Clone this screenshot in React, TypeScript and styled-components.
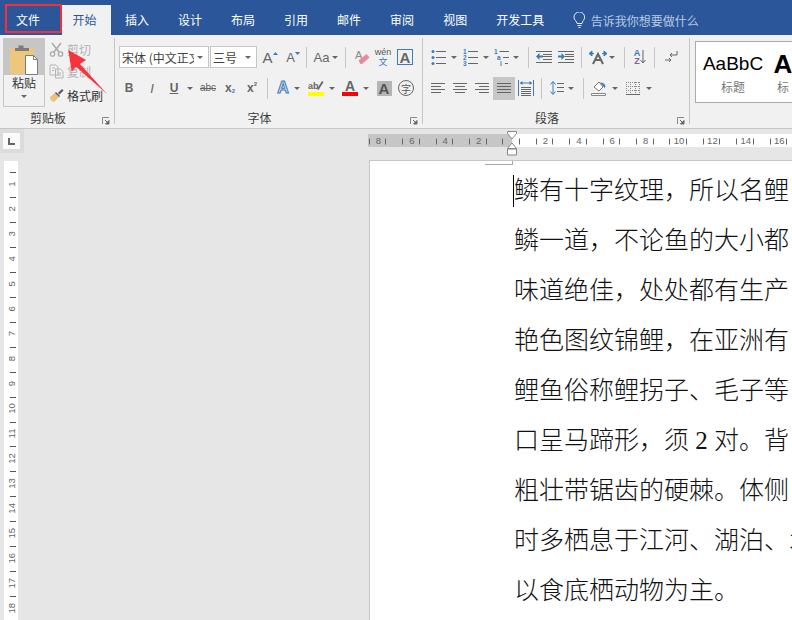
import React from 'react'
import styled, { createGlobalStyle } from 'styled-components'

const uiFont = `"Noto Sans CJK SC", "Liberation Sans", sans-serif`
const latinFont = `"Liberation Sans", "Noto Sans CJK SC", sans-serif`

const GlobalStyle = createGlobalStyle`
    html, body {
        margin: 0;
        padding: 0;
        height: 100%;
        overflow: hidden;
        font-family: ${uiFont};
    }
    #root { height: 100%; }
`

const Window = styled.div`
    position: relative;
    width: 792px;
    height: 620px;
    overflow: hidden;
    background: #e6e6e6;
    display: flex;
    flex-direction: column;
`

/* title tabs */
const TabBar = styled.div`
    height: 35px;
    flex: none;
    background: #2b579a;
    display: flex;
    align-items: flex-end;
    color: #fff;
    font-size: 12px;
`
const Tab = styled.div<{ $active?: boolean; $file?: boolean }>`
    height: 30px;
    line-height: 29px;
    padding: ${p => (p.$active ? '0 14px 0 11px' : p.$file ? '0 16.5px 0 16px' : '0 14.5px')};
    margin-right: ${p => (p.$file ? '5px' : '0')};
    background: ${p => (p.$active ? '#f1f1f1' : 'transparent')};
    color: ${p => (p.$active ? '#2b579a' : '#fff')};
    white-space: nowrap;
`
const TellMe = styled.div`
    height: 30px;
    margin-left: 14px;
    display: flex;
    align-items: center;
    gap: 5px;
    color: #b9c9e2;
    font-size: 12px;
    svg { flex: none; }
`
const FileHighlight = styled.div`
    position: absolute;
    left: 5px;
    top: 4px;
    width: 53px;
    height: 25px;
    border: 2px solid #f2303a;
`
const RedArrow = styled.svg`
    position: absolute;
    left: 60px;
    top: 44px;
`

/* ribbon */
const Ribbon = styled.div`
    height: 90px;
    flex: none;
    background: #f1f1f1;
    border-bottom: 1px solid #c6c6c6;
    display: flex;
    padding-top: 3px;
    overflow: hidden;
`
const Group = styled.div<{ $w: number }>`
    width: ${p => p.$w}px;
    flex: none;
    height: 86px;
    box-sizing: border-box;
    border-right: 1px solid #c6c6c6;
    display: flex;
    flex-direction: column;
`
const GroupBody = styled.div`
    flex: 1;
    display: flex;
    min-height: 0;
`
const ToolColumn = styled.div`
    display: flex;
    flex-direction: column;
    padding-top: 8px;
    gap: 9px;
`
const Row = styled.div`
    height: 22px;
    display: flex;
    align-items: center;
`
const GroupFooter = styled.div`
    position: relative;
    height: 18px;
    margin-top: auto;
    margin-bottom: -4px;
    padding-right: 18px;
    font-size: 12px;
    line-height: 16px;
    color: #3c3c3c;
    text-align: center;
`
const Expander = styled.svg`
    position: absolute;
    right: 4px;
    top: 7px;
`
const Tool = styled.div<{ $w?: number; $ml?: number }>`
    width: ${p => p.$w ?? 16}px;
    margin-left: ${p => p.$ml ?? 0}px;
    flex: none;
    height: 22px;
    display: flex;
    align-items: center;
    justify-content: center;
    color: #666;
    font-family: ${latinFont};
`
const PressedTool = styled(Tool)`
    background: #c6c6c6;
    height: 23px;
`
const Caret = styled.span<{ $ml?: number; $mt?: number }>`
    flex: none;
    margin-left: ${p => p.$ml ?? 0}px;
    margin-top: ${p => p.$mt ?? 0}px;
    width: 0;
    height: 0;
    border-left: 3px solid transparent;
    border-right: 3px solid transparent;
    border-top: 3px solid #666;
`
const Separator = styled.span<{ $ml?: number }>`
    flex: none;
    width: 1px;
    height: 21px;
    margin-left: ${p => p.$ml ?? 0}px;
    background: #c6c6c6;
`
const Glyph = styled.span<{ $size?: number; $bold?: boolean; $italic?: boolean; $under?: boolean; $strike?: boolean }>`
    font-size: ${p => p.$size ?? 12}px;
    font-weight: ${p => (p.$bold ? 700 : 400)};
    font-style: ${p => (p.$italic ? 'italic' : 'normal')};
    text-decoration: ${p => (p.$under ? 'underline' : p.$strike ? 'line-through' : 'none')};
    white-space: nowrap;
    line-height: 1;
`
const GlowGlyph = styled.span`
    font-size: 16px;
    font-weight: 700;
    line-height: 1;
    color: #dbe8f6;
    -webkit-text-stroke: 1px #3e7ab9;
`
const Script = styled.span<{ $up?: boolean }>`
    font-size: 6px;
    color: ${p => (p.$up ? '#666' : '#3e7ab9')};
    position: relative;
    top: ${p => (p.$up ? -4 : 3)}px;
    font-weight: 700;
`
const WenStack = styled.span`
    display: flex;
    flex-direction: column;
    align-items: center;
    font-size: 9px;
    line-height: 9px;
    color: #555;
    b {
        font-weight: 400;
        font-family: ${uiFont};
        color: #3e7ab9;
    }
`
const SortStack = styled.span`
    display: flex;
    flex-direction: column;
    align-items: center;
    font-size: 9px;
    font-weight: 700;
    line-height: 8px;
    color: #3e7ab9;
    i {
        font-style: normal;
        color: #8064a2;
    }
`
const BoxedGlyph = styled.span`
    width: 14px;
    height: 14px;
    border: 1px solid #3e7ab9;
    display: flex;
    align-items: center;
    justify-content: center;
    font-size: 15px;
    font-weight: 700;
    color: #666;
`
const ShadedGlyph = styled.span`
    width: 15px;
    height: 15px;
    background: #b4b4b4;
    display: flex;
    align-items: center;
    justify-content: center;
    font-size: 15px;
    font-weight: 700;
    color: #555;
`
const CircledGlyph = styled.span`
    width: 14px;
    height: 14px;
    border: 1px solid #666;
    border-radius: 50%;
    display: flex;
    align-items: center;
    justify-content: center;
    font-size: 10px;
    color: #555;
    font-family: ${uiFont};
`
const ColorGlyph = styled.span<{ $bar: string }>`
    width: 16px;
    height: 16px;
    position: relative;
    display: flex;
    justify-content: center;
    font-size: 14px;
    font-weight: 700;
    line-height: 12px;
    color: #666;
    &::after {
        content: '';
        position: absolute;
        left: 0;
        right: 0;
        bottom: 0;
        height: 4px;
        background: ${p => p.$bar};
    }
`
const Select = styled.div<{ $w: number; $ml?: number }>`
    width: ${p => p.$w}px;
    margin-left: ${p => p.$ml ?? 0}px;
    flex: none;
    height: 22px;
    box-sizing: border-box;
    background: #fff;
    border: 1px solid #c6c6c6;
    display: flex;
    align-items: center;
    padding: 0 5px 0 2px;
    font-size: 12px;
    color: #444;
    white-space: nowrap;
    overflow: hidden;
`
const SelectText = styled.span`
    flex: 1;
    overflow: hidden;
    min-width: 0;
`

/* clipboard */
const PasteButton = styled.div`
    width: 42px;
    height: 69px;
    margin-left: 3px;
    flex: none;
    box-sizing: border-box;
    border: 1px solid #c6c6c6;
    display: flex;
    flex-direction: column;
    align-items: center;
    font-size: 12px;
    color: #333;
`
const PasteIcon = styled.div`
    width: 100%;
    height: 36px;
    flex: none;
    background: #c6c6c6;
    display: flex;
    justify-content: center;
    align-items: flex-end;
`
const PasteLabel = styled.div`
    line-height: 16px;
`
const ClipColumn = styled.div`
    margin-left: 4px;
    display: flex;
    flex-direction: column;
`
const ClipItem = styled.div<{ $off?: boolean; $h: number }>`
    height: ${p => p.$h}px;
    display: flex;
    align-items: center;
    gap: 3px;
    font-size: 12px;
    color: ${p => (p.$off ? '#b1b1b1' : '#333')};
    svg { flex: none; }
`

/* style gallery */
const Gallery = styled.div`
    margin: 3px 0 0 5px;
    flex: none;
    width: 110px;
    height: 60px;
    background: #fff;
    border: 1px solid #ababab;
    display: flex;
    padding-left: 7px;
    overflow: hidden;
`
const StyleCard = styled.div<{ $w: number }>`
    width: ${p => p.$w}px;
    flex: none;
    display: flex;
    flex-direction: column;
    align-items: center;
    color: #777;
    font-size: 12px;
    line-height: 16px;
    white-space: nowrap;
`
const StylePreview = styled.div<{ $size: number; $bold?: boolean }>`
    height: 30px;
    margin-top: 7px;
    font-family: ${latinFont};
    font-size: ${p => p.$size}px;
    font-weight: ${p => (p.$bold ? 700 : 400)};
    line-height: 30px;
    color: #000;
`

/* document area */
const Workspace = styled.div`
    flex: 1;
    min-height: 0;
    display: flex;
`
const LeftRail = styled.div`
    width: 24px;
    flex: none;
    display: flex;
    flex-direction: column;
`
const CornerBox = styled.div`
    height: 24px;
    flex: none;
    background: #dcdcdc;
    padding: 4px 4px 4px 3px;
    box-sizing: border-box;
`
const CornerButton = styled.div`
    height: 16px;
    background: #fafafa;
    display: flex;
    align-items: center;
    justify-content: center;
`
const VerticalRuler = styled.svg`
    margin: 8px 0 0 4px;
    display: block;
`
const Canvas = styled.div`
    flex: 1;
    min-width: 0;
    display: flex;
    flex-direction: column;
    padding: 5px 0 0 344px;
    position: relative;
`
const HorizontalRuler = styled.svg`
    display: block;
    flex: none;
`
const IndentMarker = styled.svg`
    position: absolute;
    left: 483px;
    top: 2px;
`
const Page = styled.div`
    position: relative;
    margin: 13px 0 0 1px;
    flex: 1;
    background: #fff;
    border-left: 1px solid #c6c6c6;
    border-top: 1px solid #c6c6c6;
    padding: 5px 0 0 144px;
    overflow: hidden;
`
const MarginMark = styled.div`
    position: absolute;
    left: 115px;
    top: 0;
    width: 27px;
    height: 3px;
    border-right: 1px solid #a8a8a8;
    border-bottom: 1px solid #a8a8a8;
`
const Cursor = styled.div`
    position: absolute;
    left: 143px;
    top: 14px;
    width: 1px;
    height: 32px;
    background: #000;
`
const Line = styled.p`
    margin: 0;
    height: 50px;
    line-height: 50px;
    font-family: "Liberation Serif", "Noto Sans CJK SC", serif;
    font-size: 25px;
    font-weight: 300;
    color: #111;
    white-space: nowrap;
`

const Ico: React.FC<{ w?: number; h?: number; children: React.ReactNode }> = ({ w = 16, h = 16, children }) => (
    <svg width={w} height={h} viewBox={`0 0 ${w} ${h}`} fill="none">
        {children}
    </svg>
)

const ExpanderIcon = () => (
    <Expander width="8" height="8" viewBox="0 0 8 8" fill="none">
        <path d="M.5 7V.5H7" stroke="#888" />
        <path d="M3 3l3 3M7 3.5V7H3.5z" stroke="#666" fill="#666" />
    </Expander>
)

const lines = (ys: number[], x1: number, x2: number, color = '#666') =>
    ys.map(y => <path key={y} d={`M${x1} ${y + 0.5}H${x2}`} stroke={color} />)

const ListIcon = ({ kind }: { kind: 'bullet' | 'number' | 'multi' }) => (
    <Ico w={16} h={17}>
        {kind === 'bullet' &&
            [2, 8, 14].map(y => <circle key={y} cx="2" cy={y + 0.5} r="1.5" fill="#3e7ab9" />)}
        {kind === 'number' &&
            ['1', '2', '3'].map((n, i) => (
                <text key={n} x="0" y={5 + i * 6} fontSize="6.5" fontWeight="700" fontFamily="Liberation Sans" fill="#3e7ab9">
                    {n}
                </text>
            ))}
        {kind === 'multi' &&
            ['1', 'a', 'i'].map((n, i) => (
                <text key={n} x={i * 3} y={5 + i * 6} fontSize="6.5" fontWeight="700" fontFamily="Liberation Sans" fill="#3e7ab9">
                    {n}
                </text>
            ))}
        {kind === 'multi' ? (
            <path d="M5.5 2.500H15M9 8.500H15M11 14.500H14" stroke="#666" />
        ) : (
            lines([2, 8, 14], 5, 15)
        )}
    </Ico>
)

const IndentIcon = ({ out }: { out?: boolean }) => (
    <Ico w={16} h={14}>
        {lines([1, 12], 0, 16)}
        {lines([4, 6, 9], 7, 16)}
        {out ? (
            <path d="M0 6.500l3.500-3.500v2.500H7v2H3.500V10z" fill="#3e7ab9" />
        ) : (
            <path d="M7 6.500L3.500 3v2.500H0v2h3.500V10z" fill="#3e7ab9" />
        )}
    </Ico>
)

const AlignIcon = ({ mode }: { mode: 'left' | 'center' | 'right' | 'justify' }) => {
    const rows = [2, 5, 8, 11]
    const widths = mode === 'justify' ? [14, 14, 14, 14] : [14, 10, 14, 10]
    return (
        <Ico w={14} h={14}>
            {rows.map((y, i) => {
                const x = mode === 'center' ? (14 - widths[i]) / 2 : mode === 'right' ? 14 - widths[i] : 0
                return <path key={y} d={`M${x} ${y + 0.5}h${widths[i]}`} stroke="#666" />
            })}
        </Ico>
    )
}

const HorizontalRulerDrawing = () => {
    const ticks: number[] = []
    for (let k = -9; k < 17; k++) ticks.push(144 + 7 + 16.7 * k)
    const nums: { x: number; n: number }[] = []
    for (let n = -8; n <= 16; n += 2) if (n !== 0) nums.push({ x: 144 + 16.7 * n, n: Math.abs(n) })
    return (
        <HorizontalRuler width="424" height="13" viewBox="0 0 424 13" fontFamily="Liberation Sans" fontSize="9.5" fill="#666">
            <rect width="424" height="13" fill="#fff" />
            <rect width="144" height="13" fill="#c6c6c6" />
            {ticks.map(x => (
                <path key={x} d={`M${Math.round(x) + 0.5} 4.500v6`} stroke="#666" />
            ))}
            {nums.map(({ x, n }) => (
                <text key={x} x={x} y="10" textAnchor="middle">
                    {n}
                </text>
            ))}
        </HorizontalRuler>
    )
}

const VerticalRulerDrawing = () => {
    const items = Array.from({ length: 19 }, (_, i) => i)
    return (
        <VerticalRuler width="14" height="459" viewBox="0 0 14 459" fontFamily="Liberation Sans" fontSize="9.5" fill="#666">
            <rect width="14" height="459" fill="#fff" />
            {items.map(i => (
                <path key={i} d={`M6 ${Math.round(11 + 24.95 * i) + 0.5}h6`} stroke="#555" />
            ))}
            {items.slice(1).map(i => {
                const y = 23 + 24.95 * (i - 1)
                return (
                    <text key={i} transform={`translate(7.500 ${y}) rotate(-90)`} textAnchor="middle" y="3.500">
                        {i}
                    </text>
                )
            })}
        </VerticalRuler>
    )
}

const tabs = ['插入', '设计', '布局', '引用', '邮件', '审阅', '视图', '开发工具']
const bodyLines = [
    '鳞有十字纹理，所以名鲤',
    '鳞一道，不论鱼的大小都',
    '味道绝佳，处处都有生产',
    '艳色图纹锦鲤，在亚洲有',
    '鲤鱼俗称鲤拐子、毛子等',
    '口呈马蹄形，须 2 对。背',
    '粗壮带锯齿的硬棘。体侧',
    '时多栖息于江河、湖泊、水',
    '以食底栖动物为主。',
]

const App: React.FC = () => (
    <Window>
        <GlobalStyle />
        <TabBar>
            <Tab $file>文件</Tab>
            <Tab $active>开始</Tab>
            {tabs.map(t => (
                <Tab key={t}>{t}</Tab>
            ))}
            <TellMe>
                <Ico w={13} h={16}>
                    <path d="M4 11.500C4 9 1 8.500 1 5.200a5.200 5.200 0 0 1 10.600 0C11.600 8.500 9 9 9 11.500zM4.500 13.500h4M5.500 15.500h2" stroke="#e8edf5" />
                </Ico>
                告诉我你想要做什么
            </TellMe>
        </TabBar>

        <Ribbon>
            <Group $w={115}>
                <GroupBody>
                    <PasteButton>
                        <PasteIcon>
                            <Ico w={30} h={32}>
                                <rect x="1" y="5" width="24" height="26" rx="1" fill="#eec77f" />
                                <path d="M6 8V5h3.500V2.500h5V5H20v3z" fill="#7c7c7c" />
                                <path d="M16.500 12.500h8l4 4v15h-12z" fill="#fff" stroke="#7c7c7c" />
                                <path d="M24.500 12.500v4h4" stroke="#7c7c7c" />
                            </Ico>
                        </PasteIcon>
                        <PasteLabel>粘贴</PasteLabel>
                        <Caret $mt={4} />
                    </PasteButton>
                    <ClipColumn>
                        <ClipItem $off $h={22}>
                            <Ico w={15} h={15}>
                                <path d="M3 1l7 9M12 1L5 10" stroke="#aaa" strokeWidth="1.500" />
                                <circle cx="3.500" cy="12" r="2.200" stroke="#aaa" strokeWidth="1.300" />
                                <circle cx="11.500" cy="12" r="2.200" stroke="#aaa" strokeWidth="1.300" />
                            </Ico>
                            剪切
                        </ClipItem>
                        <ClipItem $off $h={22}>
                            <Ico w={15} h={15}>
                                <path d="M1 1h6l2 2v8H1z" stroke="#b5b5b5" />
                                <path d="M6.500 5h5l2.500 2.500V14H6.500zM3 4h3M3 6.500h2M8.500 9h3.500M8.500 11h3.500" stroke="#b5b5b5" />
                            </Ico>
                            复制
                        </ClipItem>
                        <ClipItem $h={26}>
                            <Ico w={15} h={15}>
                                <path d="M1 9l5-4 4 4-5 5H3l1-2-2 1z" fill="#e8c27e" />
                                <path d="M6 5l4 4 1-1-4-4zM9 5l4-4 1.500 1.500-4 4z" fill="#555" />
                            </Ico>
                            格式刷
                        </ClipItem>
                    </ClipColumn>
                </GroupBody>
                <GroupFooter>
                    剪贴板
                    <ExpanderIcon />
                </GroupFooter>
            </Group>

            <Group $w={308}>
                <ToolColumn>
                    <Row>
                        <Select $w={90} $ml={4}>
                            <SelectText>宋体 (中文正文)</SelectText>
                            <Caret $ml={3} />
                        </Select>
                        <Select $w={47} $ml={1}>
                            <SelectText>三号</SelectText>
                            <Caret />
                        </Select>
                        <Tool $ml={5}>
                            <Glyph $size={15}>A</Glyph>
                            <Ico w={5} h={14}>
                                <path d="M0 5l2.500-3L5 5z" fill="#3e7ab9" />
                            </Ico>
                        </Tool>
                        <Tool $ml={7}>
                            <Glyph $size={13}>A</Glyph>
                            <Ico w={5} h={14}>
                                <path d="M0 2l2.500 3L5 2z" fill="#3e7ab9" />
                            </Ico>
                        </Tool>
                        <Separator $ml={5} />
                        <Tool $ml={6} $w={17}>
                            <Glyph $size={13}>Aa</Glyph>
                        </Tool>
                        <Caret $ml={2} />
                        <Separator $ml={7} />
                        <Tool $ml={8}>
                            <Ico>
                                <text x="1" y="10" fontSize="11" fontFamily="Liberation Sans" fill="#888">A</text>
                                <path d="M4.500 11.500l8-6.500 3 3.500-7.500 6.500H6.500z" fill="#ea8a98" />
                            </Ico>
                        </Tool>
                        <Tool $ml={4} $w={18}>
                            <WenStack>
                                wén
                                <b>文</b>
                            </WenStack>
                        </Tool>
                        <Tool $ml={5}>
                            <BoxedGlyph>A</BoxedGlyph>
                        </Tool>
                    </Row>
                    <Row>
                        <Tool $ml={6}>
                            <Glyph $bold>B</Glyph>
                        </Tool>
                        <Tool $ml={7}>
                            <Glyph $italic $size={13}>I</Glyph>
                        </Tool>
                        <Tool $ml={6}>
                            <Glyph $bold $under>U</Glyph>
                        </Tool>
                        <Caret $ml={5} />
                        <Tool $ml={7}>
                            <Glyph $size={10} $strike>abc</Glyph>
                        </Tool>
                        <Tool $ml={6}>
                            <Glyph $bold>x</Glyph>
                            <Script>2</Script>
                        </Tool>
                        <Tool $ml={6}>
                            <Glyph $bold>x</Glyph>
                            <Script $up>2</Script>
                        </Tool>
                        <Separator $ml={7} />
                        <Tool $ml={7}>
                            <GlowGlyph>A</GlowGlyph>
                        </Tool>
                        <Caret $ml={3} />
                        <Tool $ml={8}>
                            <ColorGlyph $bar="#ffff00">
                                <Ico w={16} h={12}>
                                    <text x="0" y="9" fontSize="9" fontWeight="700" fontFamily="Liberation Sans" fill="#666">ab</text>
                                    <path d="M9 9l5-8 1.500 1L10.500 10z" fill="#666" />
                                </Ico>
                            </ColorGlyph>
                        </Tool>
                        <Caret $ml={5} />
                        <Tool $ml={7}>
                            <ColorGlyph $bar="#ff0000">A</ColorGlyph>
                        </Tool>
                        <Caret $ml={5} />
                        <Tool $ml={7}>
                            <ShadedGlyph>A</ShadedGlyph>
                        </Tool>
                        <Tool $ml={6}>
                            <CircledGlyph>字</CircledGlyph>
                        </Tool>
                    </Row>
                </ToolColumn>
                <GroupFooter>
                    字体
                    <ExpanderIcon />
                </GroupFooter>
            </Group>

            <Group $w={267}>
                <ToolColumn>
                    <Row>
                        <Tool $ml={8}><ListIcon kind="bullet" /></Tool>
                        <Caret $ml={4} />
                        <Tool $ml={6}><ListIcon kind="number" /></Tool>
                        <Caret $ml={4} />
                        <Tool $ml={5}><ListIcon kind="multi" /></Tool>
                        <Caret $ml={3} />
                        <Separator $ml={9} />
                        <Tool $ml={7}><IndentIcon out /></Tool>
                        <Tool $ml={6}><IndentIcon /></Tool>
                        <Separator $ml={7} />
                        <Tool $ml={7} $w={18}>
                            <Ico w={18} h={15}>
                                <path d="M4 14L9 4l5 10M6 10h6" stroke="#666" strokeWidth="2" />
                                <path d="M0 3.500l3-2.500v5zM18 3.500L15 1v5zM3 3.500h2M13 3.500h2" fill="#3e7ab9" stroke="#3e7ab9" />
                            </Ico>
                        </Tool>
                        <Caret $ml={2} />
                        <Separator $ml={9} />
                        <Tool $ml={8} $w={14}>
                            <SortStack>
                                A
                                <i>Z</i>
                            </SortStack>
                            <Ico w={6} h={16}>
                                <path d="M3 1v13M.5 11L3 14l2.500-3" stroke="#666" />
                            </Ico>
                        </Tool>
                        <Separator $ml={7} />
                        <Tool $ml={9} $w={14}>
                            <Ico w={14} h={14}>
                                <path d="M13 1v4H6M8 3L6 5l2 2M1 10h6M5 8l2 2-2 2" stroke="#666" />
                            </Ico>
                        </Tool>
                    </Row>
                    <Row>
                        <Tool $ml={8} $w={14}><AlignIcon mode="left" /></Tool>
                        <Tool $ml={8} $w={14}><AlignIcon mode="center" /></Tool>
                        <Tool $ml={8} $w={14}><AlignIcon mode="right" /></Tool>
                        <PressedTool $ml={4} $w={22}><AlignIcon mode="justify" /></PressedTool>
                        <Tool $ml={3}>
                            <Ico>
                                <path d="M.5 0v16M15.500 0v16" stroke="#3e7ab9" />
                                <path d="M2 3h12" stroke="#3e7ab9" />
                                <path d="M2 3l2.500-2v4zM14 3l-2.500-2v4z" fill="#3e7ab9" />
                                <path d="M3 7.500h10M3 9.500h10M3 11.500h10M3 13.500h10M3 15.500h10" stroke="#666" />
                            </Ico>
                        </Tool>
                        <Separator $ml={7} />
                        <Tool $ml={8} $w={14}>
                            <Ico w={14} h={16}>
                                <path d="M3 2v12M.5 4.500L3 1.500l2.500 3M.5 11.500L3 14.500l2.500-3" stroke="#3e7ab9" />
                                <path d="M7 3.500h7M7 7.500h7M7 11.500h7" stroke="#666" />
                            </Ico>
                        </Tool>
                        <Caret $ml={4} />
                        <Separator $ml={9} />
                        <Tool $ml={7}>
                            <Ico>
                                <path d="M.5 13.500h14v2H.5z" fill="#fff" stroke="#888" />
                                <path d="M3 7l5-5 4 5-4 4z" fill="#fff" stroke="#777" />
                                <path d="M9 2.500c3 0 5 1 5.500 4l-1 1.500-1-1.500z" fill="#3e7ab9" />
                            </Ico>
                        </Tool>
                        <Caret $ml={5} />
                        <Tool $ml={8} $w={14}>
                            <Ico w={14} h={14}>
                                <path d="M.5 1v12M4.500 1v12M9.500 1v12M13.500 1v12M0 1.500h14M0 5.500h14M0 9.500h14" stroke="#888" strokeDasharray="1 1" />
                                <path d="M0 13.500h14" stroke="#666" />
                            </Ico>
                        </Tool>
                        <Caret $ml={6} />
                    </Row>
                </ToolColumn>
                <GroupFooter>
                    段落
                    <ExpanderIcon />
                </GroupFooter>
            </Group>

            <Gallery>
                <StyleCard $w={60}>
                    <StylePreview $size={19}>AaBbC</StylePreview>
                    标题
                </StyleCard>
                <StyleCard $w={40}>
                    <StylePreview $size={26} $bold>A</StylePreview>
                    标
                </StyleCard>
            </Gallery>
        </Ribbon>

        <Workspace>
            <LeftRail>
                <CornerBox>
                    <CornerButton>
                        <Ico w={7} h={7}>
                            <path d="M1 0v6h6" stroke="#666" strokeWidth="2" />
                        </Ico>
                    </CornerButton>
                </CornerBox>
                <VerticalRulerDrawing />
            </LeftRail>
            <Canvas>
                <HorizontalRulerDrawing />
                <IndentMarker width="11" height="25" viewBox="0 0 11 25" fill="#fff" stroke="#888">
                    <path d="M.5.500h9v2L5 8 .500 2.500zM5 12l4.500 5.500h-9zM.5 18h9v6h-9z" />
                </IndentMarker>
                <Page>
                    <MarginMark />
                    <Cursor />
                    {bodyLines.map(l => (
                        <Line key={l}>{l}</Line>
                    ))}
                </Page>
            </Canvas>
        </Workspace>

        <FileHighlight />
        <RedArrow width="50" height="54" viewBox="60 44 50 54">
            <path d="M68.300 50L86 60l-6 4 27.300 30.300L76 66.700l-4.300 5z" fill="#f8333c" />
        </RedArrow>
    </Window>
)

export default App
